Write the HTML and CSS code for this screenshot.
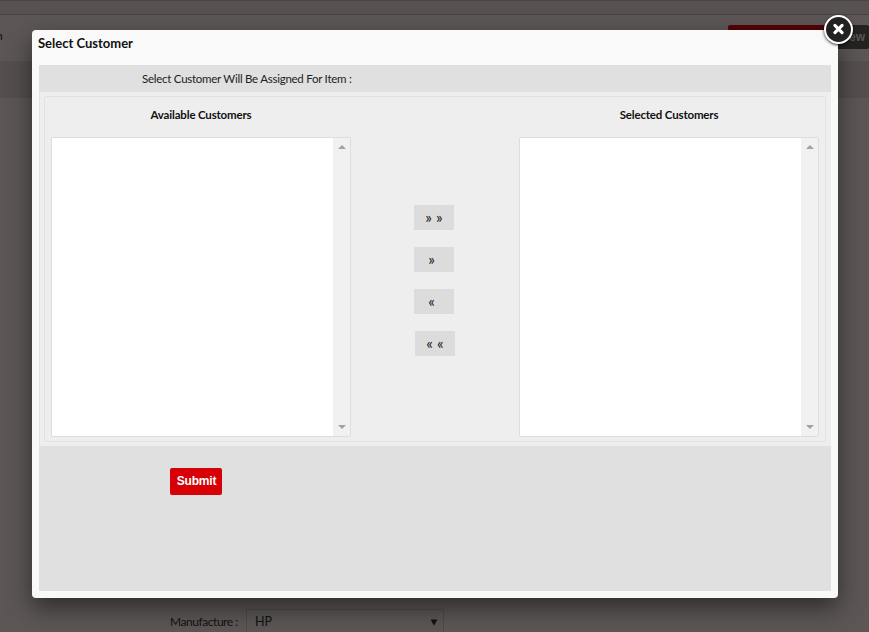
FILE: index.html
```html
<!DOCTYPE html>
<html lang="en">
<head>
<meta charset="utf-8">
<title>Select Customer</title>
<link rel="stylesheet" href="styles.css">
</head>
<body>
<div class="page">
  <div class="topbar"></div>
  <div class="page-head">
    <span class="heading-end">n</span>
    <div class="actions"><span class="action-red"></span><span class="action-dark">ew</span></div>
  </div>
  <div class="band"></div>
  <div class="form-row">
    <label class="field-label">Manufacture :</label>
    <div class="field"><span>HP</span><svg width="8" height="7" viewBox="0 0 8 7"><path d="M0.6 0.5H7.4L4 6.8Z" fill="#111"/></svg></div>
  </div>
</div>
<div class="modal">
  <button class="close" aria-label="Close"><svg width="13" height="13" viewBox="0 0 13 13"><path d="M2.9 2.4L10.1 9.6M10.1 2.4L2.9 9.6" stroke="#fff" stroke-width="3.1" stroke-linecap="round"/></svg></button>
  <h1 class="title">Select Customer</h1>
  <div class="content">
    <div class="caption">Select Customer Will Be Assigned For Item :</div>
    <div class="picker-wrap">
      <div class="picker">
        <div class="list-col">
          <h2>Available Customers</h2>
          <div class="list"><div class="scroll"><i class="up"></i><i class="down"></i></div></div>
        </div>
        <div class="movers">
          <button>» »</button>
          <button class="single">»</button>
          <button class="single">«</button>
          <button class="shifted">« «</button>
        </div>
        <div class="list-col">
          <h2>Selected Customers</h2>
          <div class="list"><div class="scroll"><i class="up"></i><i class="down"></i></div></div>
        </div>
      </div>
    </div>
    <button class="submit">Submit</button>
  </div>
</div>
</body>
</html>
```
FILE: styles.css
```css
* { box-sizing: border-box; }
body {
  margin: 0;
  height: 632px;
  overflow: hidden;
  font-family: Lato, "Liberation Sans", sans-serif;
  color: #111;
}
button { border: 0; padding: 0; font: inherit; }
.page {
  height: 632px;
  display: flex;
  flex-direction: column;
  background: #5c5756;
}
.topbar {
  height: 15px;
  border-top: 1px solid #4a4645;
  border-bottom: 1px solid #484443;
  background: #575251;
}
.page-head {
  height: 46px;
  display: flex;
  justify-content: space-between;
}
.heading-end {
  margin: 13px 0 0 -4px;
  font-size: 12px;
  line-height: 16px;
}
.actions { display: flex; padding-top: 10px; }
.action-red {
  width: 98px;
  height: 24px;
  border-radius: 2px;
  background: #520406;
}
.action-dark {
  width: 43px;
  height: 24px;
  padding-right: 4px;
  border-radius: 2px;
  background: #252222;
  color: #5a5656;
  font: bold 12px/24px "Liberation Sans", sans-serif;
  text-align: right;
}
.band { height: 37px; background: #544f4e; }
.form-row {
  display: flex;
  margin-top: 511px;
  height: 23px;
  padding-left: 170px;
  font-size: 12px;
  line-height: 26px;
}
.field-label { width: 76px; white-space: nowrap; letter-spacing: -0.45px; }
.field {
  width: 198px;
  display: flex;
  align-items: center;
  justify-content: space-between;
  padding: 2px 5px 0 8px;
  border: 1px solid #4f4a49;
  border-bottom: 0;
  font-size: 12.5px;
}
.modal {
  position: absolute;
  left: 32px;
  top: 30px;
  width: 806px;
  height: 568px;
  padding: 0 7px 7px;
  border-radius: 4px;
  background: #f9f9f9;
  box-shadow: 0 10px 25px rgba(0, 0, 0, .5);
}
.close {
  position: absolute;
  top: -15px;
  right: -15px;
  width: 29px;
  height: 29px;
  display: flex;
  align-items: center;
  justify-content: center;
  border: 2px solid #fff;
  border-radius: 50%;
  background: #222;
  box-shadow: 0 1px 3px rgba(0, 0, 0, .8);
}
.title {
  margin: 0 0 0 -1px;
  height: 35px;
  font-size: 13px;
  line-height: 27px;
  font-weight: bold;
  color: #111;
}
.content { height: 526px; background: #e0e0e0; }
.caption {
  height: 27px;
  padding-left: 103px;
  font-size: 11.5px;
  line-height: 28px;
  letter-spacing: -0.26px;
  color: #222;
}
.picker-wrap {
  height: 354px;
  padding: 4px 5px;
  background: #eee;
  border-left: 1px solid #e5e5e5;
}
.picker {
  height: 346px;
  width: 782px;
  margin-left: -1px;
  display: flex;
  padding: 0 6px;
  border: 1px solid #e2e2e2;
  border-radius: 2px;
}
.list-col { width: 300px; }
.list-col h2 {
  height: 40px;
  margin: 0;
  font-size: 11.5px;
  line-height: 36px;
  letter-spacing: -0.17px;
  text-align: center;
}
.list {
  height: 300px;
  display: flex;
  justify-content: flex-end;
  border: 1px solid #ddd;
  border-radius: 2px;
  background: #fff;
}
.scroll {
  width: 17px;
  display: flex;
  flex-direction: column;
  justify-content: space-between;
  align-items: center;
  padding: 7px 0;
  background: #f1f1f1;
}
.up, .down { border: 4px solid transparent; }
.up { border-top: 0; border-bottom-color: #a2a2a2; }
.down { border-bottom: 0; border-top-color: #a2a2a2; }
.movers {
  width: 168px;
  display: flex;
  flex-direction: column;
  align-items: flex-start;
  gap: 17px;
  padding: 108px 0 0 63px;
}
.movers button {
  width: 40px;
  height: 25px;
  background: #dcdcdc;
  color: #111;
  font-size: 15.5px;
  line-height: 23px;
}
.movers .single { padding-right: 5px; }
.movers .shifted { margin-left: 1px; }
.submit {
  display: block;
  width: 52px;
  height: 27px;
  margin: 22px 0 0 131px;
  padding: 0 0 1px 1px;
  border-radius: 2px;
  background: #d60006;
  color: #fff;
  font: bold 12px/25px "Liberation Sans", sans-serif;
  letter-spacing: -0.2px;
}
```
